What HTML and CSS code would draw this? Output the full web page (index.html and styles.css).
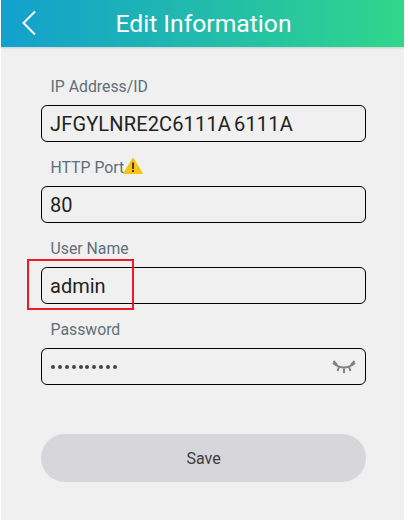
FILE: index.html
```html
<!DOCTYPE html>
<html lang="en">
<head>
  <meta charset="UTF-8" />
  <meta name="viewport" content="width=device-width, initial-scale=1.0"/>
  <title>Edit Information</title>
  <link rel="stylesheet" href="styles.css">
</head>
<body>
  <div class="screen">
    <header class="topbar">
      <svg class="back" width="16" height="26" viewBox="0 0 16 26">
        <path d="M14 1.5 L2.5 13 L14 24.5" fill="none" stroke="#fff" stroke-width="2"/>
      </svg>
      <h1>Edit Information</h1>
    </header>

    <form class="form">
      <div class="field">
        <label>IP Address/ID</label>
        <div class="box box-id">JFGYLNRE2C6111A 6111A</div>
      </div>
      <div class="field">
        <label><span>HTTP Port</span><svg class="warn" width="20" height="17" viewBox="0 0 20 17">
            <path d="M10 1 L19.5 16.5 L0.5 16.5 Z" fill="#f6c514" stroke="#f6c514" stroke-linejoin="round"/>
            <rect x="9" y="5.5" width="2" height="6.5" fill="#4a3c10"/>
            <rect x="9" y="13" width="2" height="2" fill="#4a3c10"/>
          </svg></label>
        <div class="box">80</div>
      </div>
      <div class="field">
        <label>User Name</label>
        <div class="box">admin</div>
      </div>
      <div class="field">
        <label>Password</label>
        <div class="box box-password">
          <span class="dots">
            <i></i><i></i><i></i><i></i><i></i><i></i><i></i><i></i><i></i><i></i>
          </span>
          <svg class="eye" width="24" height="14" viewBox="0 0 24 14">
            <path d="M1 3 Q12 12 23 3" fill="none" stroke="#808080" stroke-width="2"/>
            <path d="M1.5 1 L5 5 M22.5 1 L19 5 M7 7 L5.5 11 M17 7 L18.5 11 M12 8.5 L12 13" fill="none" stroke="#808080" stroke-width="2"/>
          </svg>
        </div>
      </div>
      <button class="save" type="button">Save</button>
    </form>

    <div class="marker"></div>
  </div>
</body>
</html>
```

FILE: styles.css
```css
body {
  margin: 0;
  background-color: #fff;
  font-family: Roboto, "Liberation Sans", sans-serif;
}
.screen {
  position: relative;
  width: 403px;
  height: 520px;
  margin-left: 1px;
  background-color: #f0f0f0;
  overflow: hidden;
}
.topbar {
  display: flex;
  align-items: center;
  justify-content: center;
  position: relative;
  height: 47px;
  padding-left: 2px;
  background: linear-gradient(90deg, #12a0ce, #31d68a);
  box-shadow: 0 1px 2px rgba(0, 0, 0, 0.15);
}
.topbar h1 {
  margin: 0;
  font-size: 24.7px;
  font-weight: 400;
  color: #fff;
}
.back {
  position: absolute;
  left: 20px;
  top: 10px;
}
.form {
  display: flex;
  flex-direction: column;
  gap: 15px;
  padding: 29px 38px 0 40px;
}
.field label {
  display: flex;
  align-items: center;
  height: 20px;
  margin: 0 0 9px 9.5px;
  font-size: 15.8px;
  color: #5f6f78;
}
.warn {
  margin: -3px 0 0 -1px;
}
.box {
  display: flex;
  align-items: center;
  justify-content: space-between;
  box-sizing: border-box;
  height: 37px;
  padding: 0 8px;
  border: 1px solid #000;
  border-radius: 6px;
  font-size: 20px;
  color: #222;
}
.box-id {
  letter-spacing: 0.15px;
  word-spacing: -2px;
}
.dots {
  display: flex;
  gap: 2.9px;
  margin-left: 1px;
}
.dots i {
  width: 4px;
  height: 4px;
  border-radius: 50%;
  background-color: #444;
}
.box-password {
  padding-right: 9px;
}
.save {
  height: 48px;
  margin-top: 34px;
  border: none;
  border-radius: 24px;
  background-color: #d7d6db;
  font-family: inherit;
  font-size: 16px;
  color: #3c3c3c;
}
.marker {
  position: absolute;
  left: 26px;
  top: 259px;
  width: 107px;
  height: 51px;
  box-sizing: border-box;
  border: 2.5px solid #ed1c24;
}
```
